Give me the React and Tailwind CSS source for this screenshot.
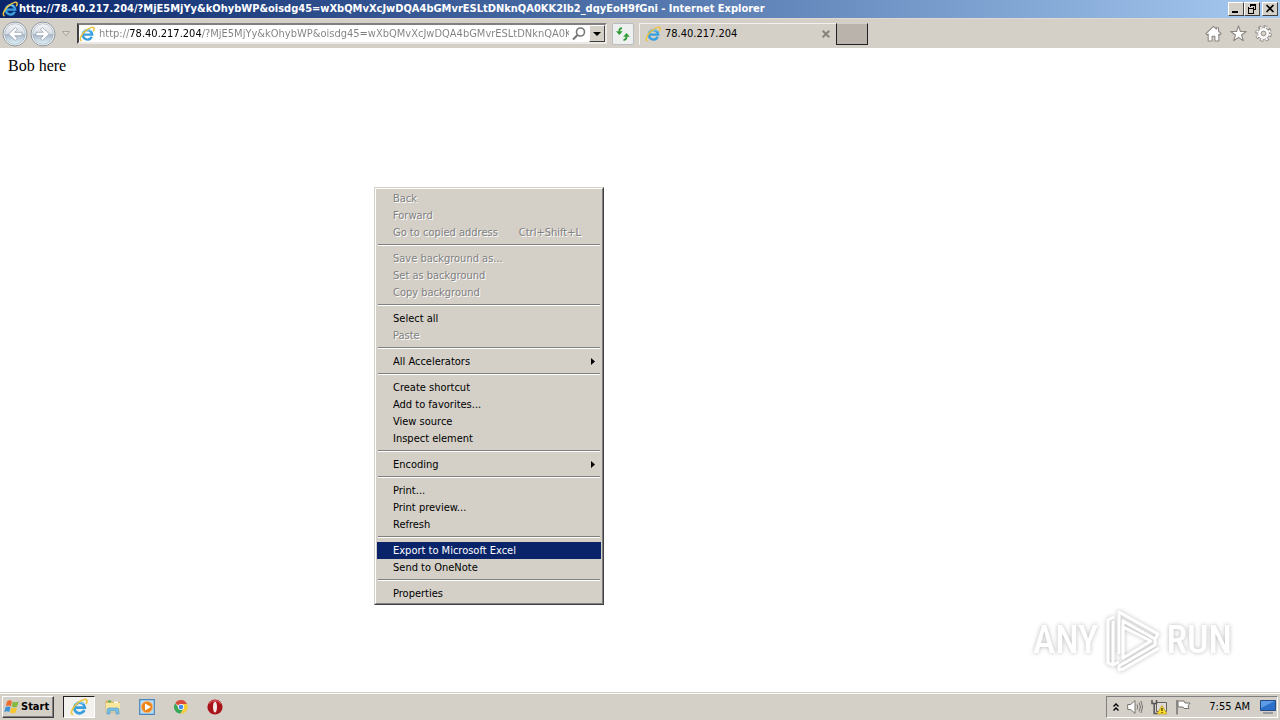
import React from "react";

const HOST = "78.40.217.204";
const QUERY = "/?MjE5MjYy&kOhybWP&oisdg45=wXbQMvXcJwDQA4bGMvrESLtDNknQA0KK2Ib2_dqyEoH9fGni";

const MENU = [
  [
    { label: "Back", disabled: true },
    { label: "Forward", disabled: true },
    { label: "Go to copied address", shortcut: "Ctrl+Shift+L", disabled: true },
  ],
  [
    { label: "Save background as...", disabled: true },
    { label: "Set as background", disabled: true },
    { label: "Copy background", disabled: true },
  ],
  [{ label: "Select all" }, { label: "Paste", disabled: true }],
  [{ label: "All Accelerators", submenu: true }],
  [
    { label: "Create shortcut" },
    { label: "Add to favorites..." },
    { label: "View source" },
    { label: "Inspect element" },
  ],
  [{ label: "Encoding", submenu: true }],
  [{ label: "Print..." }, { label: "Print preview..." }, { label: "Refresh" }],
  [{ label: "Export to Microsoft Excel", active: true }, { label: "Send to OneNote" }],
  [{ label: "Properties" }],
];

function IEIcon({ className = "size-4" }) {
  return (
    <svg viewBox="0 0 16 16" className={className} aria-hidden="true">
      <path d="M12.800 10.800A4.700 4.700 0 1 1 13.200 8.600H4.500" fill="none" stroke="#3a9fde" strokeWidth="2.400" />
      <path d="M4.300 6.800A4.800 4.800 0 0 1 12 5.200" fill="none" stroke="#8bd4f7" strokeWidth="1" />
      <path d="M2 14.600C0 13.200 2.600 8 7 4.400 10.500 1.600 14 .6 14.900 1.800c.5.800.2 1.800-.4 3" fill="none" stroke="#ecc440" strokeWidth="1.500" strokeLinecap="round" />
    </svg>
  );
}

function NavArrow({ flip }) {
  return (
    <svg viewBox="0 0 26 26" className="size-[26px]" aria-hidden="true">
      <defs>
        <linearGradient id={flip ? "orbF" : "orbB"} x1="0" y1="0" x2="0" y2="1">
          <stop offset="0" stopColor="#f4f5f7" />
          <stop offset=".48" stopColor="#d9dee6" />
          <stop offset=".52" stopColor="#aab6c6" />
          <stop offset="1" stopColor="#dff4fa" />
        </linearGradient>
      </defs>
      <circle cx="13" cy="13" r="12" fill="#f6f7f8" stroke="#8f979f" strokeWidth="1" />
      <circle cx="13" cy="13" r="10.300" fill={flip ? "url(#orbF)" : "url(#orbB)"} stroke="#9fb0bf" strokeWidth=".7" />
      <path
        d={flip ? "M6 11.300h7.300L10.600 8.400 12.600 6.600 19.400 13l-6.800 6.400-2-1.800 2.700-2.900H6z" : "M20 11.300h-7.300l2.700-2.900-2-1.800L6.600 13l6.800 6.400 2-1.800-2.700-2.900H20z"}
        fill="#fff"
        stroke="#97a3b3"
        strokeWidth=".8"
      />
    </svg>
  );
}

function WindowButton({ label, children, className = "" }) {
  return (
    <button
      aria-label={label}
      className={`flex h-3.5 w-4 items-center justify-center border border-t-white border-l-white border-r-[#404040] border-b-[#404040] bg-[#d4d0c8] ${className}`}
    >
      <svg viewBox="0 0 12 12" className="size-3" fill="none" stroke="#000" shapeRendering="crispEdges" aria-hidden="true">
        {children}
      </svg>
    </button>
  );
}

function TitleBar() {
  return (
    <header className="flex h-[18px] shrink-0 items-center bg-linear-to-r from-[#0a246a] to-[#a6caf0] pr-0.5 pl-0.5">
      <IEIcon className="mr-px size-4 shrink-0" />
      <h1 className="min-w-0 flex-1 truncate text-[11px] leading-[18px] font-bold text-white">
        {`http://${HOST}${QUERY} - Internet Explorer`}
      </h1>
      <WindowButton label="Minimize">
        <path d="M2 9h6" strokeWidth="2" />
      </WindowButton>
      <WindowButton label="Restore" className="mr-0.5">
        <path d="M4 1.500h6M4.500 1v3M9.500 1v5M8 6.500h2M2 5h6M2.500 4v6M7.500 4v6M2 10.500h6M4 2.500h6" />
      </WindowButton>
      <WindowButton label="Close">
        <path d="M2.500 2l7 7M9.500 2l-7 7" strokeWidth="1.700" shapeRendering="auto" />
      </WindowButton>
    </header>
  );
}

function NavBar() {
  return (
    <nav className="flex h-[30px] shrink-0 items-center border-t border-[#e0d9d1] bg-[#d4d0c8] pr-2 pl-0.5">
      <button aria-label="Back"><NavArrow /></button>
      <button aria-label="Forward" className="ml-0.5"><NavArrow flip /></button>
      <button aria-label="Recent pages" className="ml-1 flex w-3 justify-center">
        <svg viewBox="0 0 8 6" className="h-1.5 w-2" aria-hidden="true">
          <path d="M.5.5h7L4 4.800z" fill="#dedad5" stroke="#aaa39f" />
        </svg>
      </button>
      <div className="ml-[5px] flex h-[21px] w-[530px] items-center border-2 border-t-[#808080] border-l-[#404040] border-r-[#ece9e4] border-b-[#ece9e4] bg-white">
        <IEIcon className="size-4 shrink-0" />
        <input
          aria-label="Address"
          defaultValue={`http://${HOST}${QUERY}`}
          className="ml-1 h-4 min-w-0 flex-1 bg-[linear-gradient(to_right,#808080_31px,#000_31px,#000_103px,#808080_103px)] bg-clip-text text-[11px] leading-4 text-transparent outline-none"
        />
        <button aria-label="Search" className="mx-0.5 size-4">
          <svg viewBox="0 0 16 16" className="size-4" fill="none" stroke="#777" aria-hidden="true">
            <circle cx="9.500" cy="6" r="4" strokeWidth="1.600" />
            <path d="M6.500 9L2 13.500" strokeWidth="2.200" />
          </svg>
        </button>
        <button aria-label="Show address history" className="flex h-[17px] w-4 items-center justify-center border border-t-white border-l-white border-r-[#404040] border-b-[#404040] bg-[#d4d0c8]">
          <svg viewBox="0 0 8 4" className="h-1 w-2" aria-hidden="true"><path d="M0 0h8L4 4z" /></svg>
        </button>
      </div>
      <button aria-label="Refresh" className="ml-[5px] flex size-[22px] items-center justify-center rounded-xs border border-[#b9bcc0] bg-[#eef0f0]">
        <svg viewBox="0 0 16 16" className="size-4" fill="none" stroke="#2f9a35" strokeWidth="1.800" aria-hidden="true">
          <path d="M7 2.200C5 2.200 4.300 3.500 4.300 5.500" />
          <path d="M1 5.200h6.600L4.300 9z" fill="#2f9a35" stroke="none" />
          <path d="M8.500 14c2.200 0 3-1.400 3-3.500" />
          <path d="M8.200 10.800h6.600L11.500 7z" fill="#2f9a35" stroke="none" />
        </svg>
      </button>
      <div className="ml-[5px] flex h-[22px] w-[197px] items-center border-t border-l border-[#f3f1ed] pl-[5px]">
        <IEIcon className="size-4 shrink-0" />
        <span className="ml-1 flex-1 text-[11px] leading-4">{HOST}</span>
        <button aria-label="Close tab" className="mr-1 p-0.5">
          <svg viewBox="0 0 8 8" className="size-2" stroke="#88827c" strokeWidth="2" aria-hidden="true"><path d="M.7.700l6.600 6.600M7.300.7L.7 7.300" /></svg>
        </button>
      </div>
      <button aria-label="New tab" className="h-[22px] w-8 border border-t-[#d4d0c8] border-r-[#202020] border-b-[#202020] border-l-[#202020] bg-[#bab3ac]" />
      <div className="ml-auto flex items-center gap-2">
        <button aria-label="Home">
          <svg viewBox="0 0 16 16" className="size-[17px]" fill="#fff" stroke="#8b8682" strokeWidth="1" strokeLinejoin="round" aria-hidden="true">
            <path d="M8 1.200L.8 8.200l1.200 1.100L3 8.500V15h3.700v-4.500h2.600V15H13V8.500l1 .8 1.200-1.100L12.700 5.800V2.500h-2v1.400z" />
          </svg>
        </button>
        <button aria-label="Favorites">
          <svg viewBox="0 0 16 16" className="size-[17px]" fill="#fff" stroke="#8b8682" strokeWidth="1" strokeLinejoin="round" aria-hidden="true">
            <path d="M8 .8l1.800 5.300h5.500l-4.400 3.300 1.600 5.400L8 11.600l-4.500 3.200 1.600-5.400L.7 6.100h5.500z" />
          </svg>
        </button>
        <button aria-label="Tools">
          <svg viewBox="0 0 16 16" className="size-[17px]" aria-hidden="true">
            <circle cx="8" cy="8" r="6.200" fill="none" stroke="#8b8682" strokeWidth="3.200" strokeDasharray="2.870 2" />
            <circle cx="8" cy="8" r="4.600" fill="#fff" stroke="#8b8682" strokeWidth="2.200" />
            <circle cx="8" cy="8" r="6" fill="none" stroke="#fff" strokeWidth="2" strokeDasharray="1.700 3.010" strokeDashoffset="-.5" />
            <circle cx="8" cy="8" r="3.800" fill="none" stroke="#fff" strokeWidth="2.600" />
            <circle cx="8" cy="8" r="2.300" fill="#d4d0c8" stroke="#8b8682" strokeWidth=".9" />
          </svg>
        </button>
      </div>
    </nav>
  );
}

function MenuItem({ item }) {
  const tone = item.active
    ? "bg-[#0a246a] text-white"
    : item.disabled
      ? "text-[#808080] [text-shadow:1px_1px_0_#fff]"
      : "text-black";
  return (
    <button
      role="menuitem"
      disabled={item.disabled}
      className={`flex h-[17px] w-full items-center pr-1 pl-4 text-left text-[11px] leading-[17px] ${tone}`}
    >
      <span className="flex-1">{item.label}</span>
      {item.shortcut && <span className="mr-4">{item.shortcut}</span>}
      {item.submenu && (
        <svg viewBox="0 0 4 7" className="mr-0.5 h-[7px] w-1" aria-hidden="true"><path d="M0 0v7l4-3.500z" /></svg>
      )}
    </button>
  );
}

function ContextMenu() {
  return (
    <div
      role="menu"
      className="absolute top-[139px] left-[374px] w-[230px] border border-t-[#d4d0c8] border-l-[#d4d0c8] border-r-[#404040] border-b-[#404040] bg-[#d4d0c8]"
    >
      <div className="border border-t-white border-l-white border-r-[#808080] border-b-[#808080] p-px">
        {MENU.map((group, i) => (
          <React.Fragment key={group[0].label}>
            {i > 0 && (
              <div role="separator" className="mx-px h-[9px] pt-[3px]">
                <div className="h-0.5 border-t border-b border-t-[#808080] border-b-white" />
              </div>
            )}
            {group.map((item) => <MenuItem key={item.label} item={item} />)}
          </React.Fragment>
        ))}
      </div>
    </div>
  );
}

function Watermark() {
  return (
    <div className="absolute right-12 bottom-5 flex items-center gap-1 font-['Roboto_Condensed','Liberation_Sans_Narrow',sans-serif] text-[38px] leading-[64px] font-medium text-white drop-shadow-[0_0_2px_rgba(0,0,0,0.28)]">
      <span>ANY</span>
      <svg viewBox="0 0 60 64" className="h-16 w-[60px]" fill="none" stroke="#fff" strokeWidth="3" strokeLinejoin="round" aria-hidden="true">
        <path d="M17 46V4l39 22-3 5-32-18v32" />
        <path d="M12 9l-6 3v43l5 2 6-3" />
        <path d="M11 13v42" />
        <path d="M53 31v6L17 58v4l4-1 36-21" />
        <path d="M21 19v31l28-17z" />
      </svg>
      <span>RUN</span>
    </div>
  );
}

function Taskbar() {
  return (
    <footer className="flex h-7 shrink-0 items-center border-t border-[#d4d0c8] bg-[#d4d0c8] pr-0.5 pl-0.5 shadow-[inset_0_1px_0_#fff]">
      <button className="mt-px flex h-[22px] w-[52px] items-center border border-t-white border-l-white border-r-[#404040] border-b-[#404040] pl-px text-[11px] font-bold shadow-[inset_-1px_-1px_0_#808080]">
        <svg viewBox="0 0 16 16" className="mr-px size-4 shrink-0" aria-hidden="true">
          <path d="M3.200 2.200C5 1 6.500 1.200 8 2.200L6.800 7.200C5.200 6.200 3.700 6.200 1.800 7.200z" fill="#ec6b2d" />
          <path d="M8.800 2.600c1.800 1 3.700.9 5.900-.3l-1.500 5.200c-2 1.200-3.900 1.100-5.600.1z" fill="#85b943" />
          <path d="M1.600 8.100c1.900-1 3.500-.9 5-.1l-1.300 5c-1.600-1-3.200-.9-5 .1z" fill="#3c92d6" />
          <path d="M7.400 8.500c1.700 1 3.600 1 5.600-.1l-1.400 5c-2 1.100-3.800 1.100-5.500.1z" fill="#f8c62c" />
        </svg>
        <span>Start</span>
      </button>
      <button aria-label="Internet Explorer" className="mt-px ml-[9px] flex h-[22px] w-8 items-center justify-center border border-t-[#202020] border-l-[#202020] border-r-white border-b-white bg-[#f4f2ef]">
        <IEIcon className="size-[18px]" />
      </button>
      <div className="mt-px ml-2.5 flex items-center gap-[18px]">
        <button aria-label="Windows Explorer">
          <svg viewBox="0 0 16 16" className="size-4" aria-hidden="true">
            <path d="M1 2h5l1 1h7v10H1z" fill="#e8c860" stroke="#c9a24a" strokeWidth=".6" />
            <path d="M3 1.500h3v2H3z" fill="#65ac60" /><path d="M9 2.500h4v2H9z" fill="#fff" />
            <path d="M1 4h14v9H1z" fill="#f8e79c" />
            <path d="M2 15v-4c0-1.500 1-2 2-2h8c1.200 0 2 .5 2 2v4h-3v-3H5v3z" fill="#78bde4" stroke="#4d98c4" strokeWidth=".6" />
          </svg>
        </button>
        <button aria-label="Windows Media Player">
          <svg viewBox="0 0 16 16" className="size-4" aria-hidden="true">
            <path d="M.7.700h14.600v14.600H.7z" fill="#b9dbf5" stroke="#4787be" strokeWidth="1.200" />
            <circle cx="8" cy="8" r="5.700" fill="#ee8419" stroke="#fac17b" strokeWidth=".7" />
            <path d="M6 4.500v7L12 8z" fill="#fff" />
          </svg>
        </button>
        <button aria-label="Google Chrome">
          <svg viewBox="0 0 16 16" className="size-4" aria-hidden="true">
            <path d="M8 8L2.300 4.200A6.500 6.500 0 0 1 14 5H8z" fill="#dc4a3b" />
            <path d="M14 5a6.500 6.500 0 0 1-6.500 9.500L11 8.500 8 5z" fill="#f8cc38" />
            <path d="M2.300 4.200a6.500 6.500 0 0 0 5.200 10.300L10 10H6z" fill="#3aa757" />
            <circle cx="8" cy="8" r="3" fill="#fff" /><circle cx="8" cy="8" r="2.300" fill="#4489ee" />
          </svg>
        </button>
        <button aria-label="Opera">
          <svg viewBox="0 0 16 16" className="size-4" aria-hidden="true">
            <circle cx="8" cy="8" r="7.600" fill="#a81219" />
            <path d="M2 5a7 7 0 0 1 12 0" fill="none" stroke="#d85458" strokeWidth="1.200" />
            <ellipse cx="8" cy="8" rx="2" ry="5.500" fill="#f5e8e8" />
          </svg>
        </button>
      </div>
      <div className="mt-px ml-auto flex h-[22px] items-center gap-2 border border-t-[#808080] border-l-[#808080] border-r-white border-b-white pl-1.5">
        <button aria-label="Show hidden icons">
          <svg viewBox="0 0 6 8" className="h-2 w-1.5" fill="none" stroke="#000" strokeWidth="1.400" aria-hidden="true"><path d="M.5 3.500L3 1l2.500 2.500M.5 7.500L3 5l2.500 2.500" /></svg>
        </button>
        <button aria-label="Volume">
          <svg viewBox="0 0 16 16" className="size-4" fill="none" stroke="#77736f" aria-hidden="true">
            <path d="M.7 5.500h3L8 1.500v13l-4.300-4h-3z" fill="#fff" />
            <path d="M10 5.500q1.700 2.500 0 5M12 3.500q3 4.500 0 9M14 2q3 6 0 12" />
          </svg>
        </button>
        <button aria-label="Network">
          <svg viewBox="0 0 16 16" className="size-4" aria-hidden="true">
            <path d="M5.500 3.500h10v9h-10z" fill="#dedbd6" stroke="#66625e" />
            <path d="M1 1v3.500h4.500V1M3.200 4.500v10h4" fill="none" stroke="#555" strokeWidth="1.500" />
            <path d="M11 6.500l5 8.500H6z" fill="#ffdf28" stroke="#b5931b" strokeWidth=".7" />
            <path d="M11 9v3M11 13v1" stroke="#332c0b" strokeWidth="1.200" />
          </svg>
        </button>
        <button aria-label="Action Center">
          <svg viewBox="0 0 16 16" className="size-4" aria-hidden="true">
            <path d="M2 1v14.500" stroke="#77736f" strokeWidth="1.500" />
            <path d="M3 2h6l1 2h5l-2 3 1 2.500H9L8 8H3z" fill="#fff" stroke="#77736f" />
          </svg>
        </button>
        <time className="ml-2.5 text-[11px] leading-4">7:55 AM</time>
        <button aria-label="Show desktop" className="ml-px">
          <svg viewBox="0 0 18 18" className="size-[18px]" aria-hidden="true">
            <path d="M1.500 2.500h15v10h-15z" fill="#2c6fc9" stroke="#254b87" />
            <path d="M2 3h14L2 10z" fill="#5c9be6" /><path d="M4 15h10" stroke="#858b94" strokeWidth="1.500" />
          </svg>
        </button>
      </div>
    </footer>
  );
}

export default function App() {
  return (
    <div className="flex min-h-screen flex-col bg-white font-['Tahoma','DejaVu_Sans_Condensed','DejaVu_Sans',sans-serif] text-black">
      <TitleBar />
      <NavBar />
      <main className="relative flex-1 bg-white">
        <p className="px-2 pt-2 font-['Liberation_Serif',serif] text-base leading-[19px]">Bob here</p>
        <ContextMenu />
        <Watermark />
      </main>
      <Taskbar />
    </div>
  );
}
